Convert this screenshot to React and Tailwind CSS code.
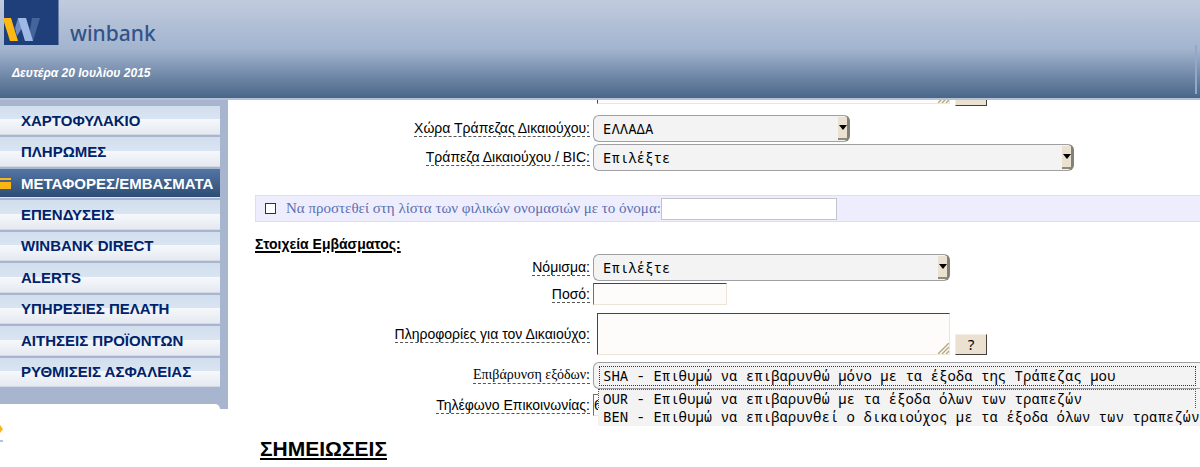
import React from 'react';

const menuItems = [
    { label: 'ΧΑΡΤΟΦΥΛΑΚΙΟ' },
    { label: 'ΠΛΗΡΩΜΕΣ' },
    { label: 'ΜΕΤΑΦΟΡΕΣ/ΕΜΒΑΣΜΑΤΑ', active: true },
    { label: 'ΕΠΕΝΔΥΣΕΙΣ' },
    { label: 'WINBANK DIRECT' },
    { label: 'ALERTS' },
    { label: 'ΥΠΗΡΕΣΙΕΣ ΠΕΛΑΤΗ' },
    { label: 'ΑΙΤΗΣΕΙΣ ΠΡΟΪΟΝΤΩΝ' },
    { label: 'ΡΥΘΜΙΣΕΙΣ ΑΣΦΑΛΕΙΑΣ' },
];

const Header = () => (
    <header className="relative h-[100px] border-b-2 border-[#b4c1d6] bg-linear-to-b from-[#c0cbde] via-[#a3b4cf] via-50% to-[#496689]">
        <div className="flex items-start pl-1">
            <svg className="h-[45px] w-[55px]" viewBox="0 0 55 45" aria-hidden="true">
                <rect width="54.5" height="45" fill="#1e3f7a" />
                <path d="M28 18h8l-7 23h-5z" fill="#46649c" />
                <path d="M14 18h5l-1 10-5 8-2-8z" fill="#6d8cc4" />
                <path d="M14 18h8l7 23h-8z" fill="#9fb9e6" />
                <path d="M0 18h7l7 23H6L0 22z" fill="#fdb913" />
            </svg>
            <span className="mt-[17px] ml-[11px] font-['Noto_Sans',sans-serif] text-[21px] leading-8 font-medium text-[#335389]">winbank</span>
        </div>
        <p className="mt-4 ml-3 font-['Liberation_Sans',sans-serif] text-[12px] leading-4 font-bold text-white italic">
            Δευτέρα 20 Ιουλίου 2015
        </p>
        <div className="absolute right-[3px] bottom-1 h-[49px] w-[2px] bg-[#93a8c8]"></div>
    </header>
);

const Sidebar = () => (
    <aside className="w-[228px] shrink-0">
        <div className="bg-[#a7b5ce] pt-[6px]">
            <nav className="flex h-[281px] w-[220px] flex-col gap-[2px]">
                {menuItems.map((item) => (
                    <a
                        key={item.label}
                        href="#"
                        className={
                            item.active
                                ? 'relative flex flex-1 items-center border-b border-[#dfe6ef] bg-linear-to-b from-[#5476a6] to-[#2c4d74] pt-px pl-[21px] text-white'
                                : 'relative flex flex-1 items-center border-b border-[#d3dae5] bg-linear-to-b from-[#d2deed] from-0% via-[#d9e5f1] via-50% to-[#e6eaf1] pt-px pl-[21px] text-[#00226b]'
                        }
                    >
                        {!item.active && (
                            <span className="absolute inset-x-0 bottom-0 h-[15px] bg-linear-to-b from-[#f6f8fb] to-[#e5e9f0]"></span>
                        )}
                        {item.active && (
                            <svg className="absolute left-0 h-[11px] w-[11px]" viewBox="0 0 11 11" aria-hidden="true">
                                <path d="M0 0h11v2H0zM0 4h11v7H0z" fill="#fdb515" />
                            </svg>
                        )}
                        <span className="relative text-[15px] leading-5 font-bold whitespace-nowrap">{item.label}</span>
                    </a>
                ))}
            </nav>
            <div className="mt-[17px] h-[5px] w-[220px] rounded-tr-lg bg-white"></div>
        </div>
        <svg className="mt-[15px] h-5 w-[4px]" viewBox="0 0 4 20" aria-hidden="true">
            <path d="M0 1l3 4-3 4z" fill="#fdb515" />
            <path d="M0 16h3v2H0z" fill="#b4c1d8" />
        </svg>
    </aside>
);

const Row = ({ id, label, serif, children }) => (
    <div className="flex items-center gap-[3px]">
        <div className="flex w-[335px] shrink-0 justify-end">
            <label
                htmlFor={id}
                className={
                    serif
                        ? "border-b border-dashed border-[#555] font-['Liberation_Serif',serif] text-[14px] leading-4 whitespace-nowrap"
                        : 'border-b border-dashed border-[#555] text-[14px] leading-4 whitespace-nowrap'
                }
            >
                {label}
            </label>
        </div>
        {children}
    </div>
);

const Select = ({ id, width, children }) => (
    <div className={`relative ${width}`}>
        <select
            id={id}
            className="block h-[27px] w-full appearance-none rounded-md border border-r-3 border-[#a0a0a4] border-r-[#858075] bg-[#f3f3f3] pl-[9px] font-['Noto_Sans_Mono','Liberation_Mono',monospace] text-[14px] leading-5"
        >
            {children}
        </select>
        <span className="pointer-events-none absolute top-[2px] right-[3px] flex h-[23px] w-[9px] items-center justify-center border-b-2 border-[#8f897c] bg-[#ebe1d1]">
            <svg className="h-[5px] w-[8px]" viewBox="0 0 8 5" aria-hidden="true">
                <path d="M0 0h8L4 5z" fill="#000" />
            </svg>
        </span>
    </div>
);

const TextArea = ({ id, label }) => (
    <div className="relative ml-1 w-[353px]">
        <textarea
            id={id}
            aria-label={label}
            className="block h-[42px] w-full resize-none border border-[#eee4d8] border-t-[#484440] border-l-[#484440] bg-[#fdfcfa]"
        ></textarea>
        <svg className="pointer-events-none absolute right-px bottom-px h-[11px] w-[11px]" viewBox="0 0 11 11" aria-hidden="true">
            <path d="M0 11L11 0M4 11l7-7M8 11l3-3" stroke="#b5a67e" strokeWidth="1.4" />
        </svg>
    </div>
);

const HelpButton = ({ children }) => (
    <button
        type="button"
        aria-label="Βοήθεια"
        className="ml-[2px] h-[21px] w-8 self-end border border-[#f4ede2] border-r-[#45403a] border-b-[#45403a] bg-[#ebe1d1] font-['Noto_Sans_Mono','Liberation_Mono',monospace] text-[14px] leading-4"
    >
        {children}
    </button>
);

const App = () => {
    return (
        <div className="min-h-screen overflow-hidden bg-white font-['Liberation_Sans',sans-serif] text-black">
            <Header />
            <div className="flex">
                <Sidebar />
                <main className="min-w-0 flex-1 pl-[27px]">
                    {/* bottom edge of the field scrolled under the header */}
                    <div className="flex h-[6px] items-end gap-[3px] overflow-hidden pl-[338px]">
                        <div className="mb-[2px]">
                            <TextArea id="address" label="Διεύθυνση" />
                        </div>
                        <HelpButton />
                    </div>

                    <div className="mt-[9px] flex flex-col gap-[2px]">
                        <Row id="country" label="Χώρα Τράπεζας Δικαιούχου:">
                            <Select id="country" width="w-[257px]">
                                <option>ΕΛΛΑΔΑ</option>
                            </Select>
                        </Row>
                        <Row id="bank" label="Τράπεζα Δικαιούχου / BIC:">
                            <Select id="bank" width="w-[481px]">
                                <option>Επιλέξτε</option>
                            </Select>
                        </Row>
                    </div>

                    <div className="mt-6 flex h-[27px] items-center border border-r-0 border-[#dcdff0] bg-[#eeedfd] pl-[9px] font-['Liberation_Serif',serif] text-[15px] text-[#5a70b0]">
                        <input
                            id="friendly"
                            type="checkbox"
                            className="h-[11px] w-[11px] appearance-none border border-[#333] bg-white"
                        />
                        <label htmlFor="friendly" className="ml-[10px] whitespace-nowrap">
                            Να προστεθεί στη λίστα των φιλικών ονομασιών με το όνομα:
                        </label>
                        <input
                            type="text"
                            aria-label="όνομα"
                            className="h-[22px] w-[176px] border border-[#c4c4c8] bg-white"
                        />
                    </div>

                    <h3 className="mt-[14px] text-[14px] leading-4 font-bold underline decoration-2 underline-offset-2">Στοιχεία Εμβάσματος:</h3>

                    <div className="mt-[2px]">
                        <Row id="currency" label="Νόμισμα:">
                            <Select id="currency" width="w-[357px]">
                                <option>Επιλέξτε</option>
                            </Select>
                        </Row>
                    </div>
                    <div className="mt-[2px]">
                        <Row id="amount" label="Ποσό:">
                            <input
                                id="amount"
                                type="text"
                                className="h-[22px] w-[134px] border border-[#eee4d8] border-t-[#484440] border-l-[#77706a] bg-[#fdfcfa]"
                            />
                        </Row>
                    </div>
                    <div className="mt-2">
                        <Row id="info" label="Πληροφορίες για τον Δικαιούχο:">
                            <TextArea id="info" />
                            <HelpButton>?</HelpButton>
                        </Row>
                    </div>

                    <div className="mt-[7px]">
                        <Row id="charges" label="Επιβάρυνση εξόδων:" serif>
                            <div className="relative flex-1">
                                <select
                                    id="charges"
                                    className="block h-[27px] w-full appearance-none rounded-l-md border border-r-0 border-[#a0a0a4] bg-[#f3f3f3] pl-[9px] font-['Noto_Sans_Mono','Liberation_Mono',monospace] text-[14px] leading-5"
                                >
                                    <option>SHA - Επιθυμώ να επιβαρυνθώ μόνο με τα έξοδα της Τράπεζας μου</option>
                                </select>
                                <span className="pointer-events-none absolute top-1 right-1 bottom-[3px] left-[6px] border border-dotted border-[#333]"></span>
                                <ul
                                    role="listbox"
                                    aria-label="Επιβάρυνση εξόδων"
                                    className="absolute top-[27px] right-0 left-[5px] z-10 bg-[#f3f3f3] font-['Noto_Sans_Mono','Liberation_Mono',monospace] text-[14px] whitespace-nowrap"
                                >
                                    <li role="option" aria-selected="false" className="mr-1 border border-b-0 border-dotted border-[#555] pl-1 leading-[18px]">
                                        OUR - Επιθυμώ να επιβαρυνθώ με τα έξοδα όλων των τραπεζών
                                    </li>
                                    <li role="option" aria-selected="false" className="pl-[5px] leading-[18px]">
                                        BEN - Επιθυμώ να επιβαρυνθεί ο δικαιούχος με τα έξοδα όλων των τραπεζών
                                    </li>
                                </ul>
                            </div>
                        </Row>
                    </div>
                    <div className="mt-[5px]">
                        <Row id="phone" label="Τηλέφωνο Επικοινωνίας:">
                            <input
                                id="phone"
                                type="text"
                                defaultValue="6"
                                className="h-[22px] w-[134px] border border-[#eee4d8] border-t-[#77706a] border-l-[#77706a] bg-[#fdfcfa] text-[14px]"
                            />
                        </Row>
                    </div>

                    <h2 className="mt-[21px] ml-[5px] text-[21px] leading-6 font-bold underline decoration-2 underline-offset-2">ΣΗΜΕΙΩΣΕΙΣ</h2>
                </main>
            </div>
        </div>
    );
};

export default App;
